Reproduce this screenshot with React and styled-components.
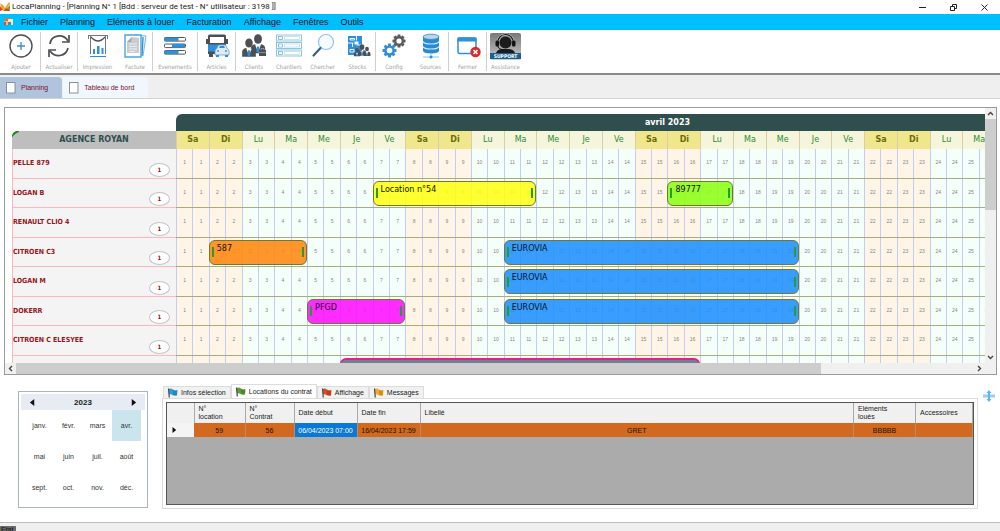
import React, { useState } from "react";
import styled, { createGlobalStyle } from "styled-components";

// ---------- STYLES ----------
const GlobalStyle = createGlobalStyle`
  * { box-sizing: border-box; }
  body {
    margin: 0;
    background: #fff;
    font-family: "Liberation Sans", Arial, sans-serif;
    font-size: 7px;
    color: #222;
  }
  button {
    font: inherit;
    color: inherit;
    border: 0;
    padding: 0;
    background: none;
  }
  svg { display: block; flex: none; }
`;

const Page = styled.div`
  display: flex;
  flex-direction: column;
  min-height: 100vh;
`;

const TitleBar = styled.header`
  display: flex;
  align-items: center;
  height: 14px;
  font-family: Roboto, sans-serif;
`;

const Title = styled.h1`
  flex: 1;
  margin: 0;
  padding-left: 1px;
  font-size: 8px;
  line-height: 12px;
  font-weight: 400;
`;

const WindowButton = styled.button`
  display: flex;
  justify-content: center;
  align-items: center;
  width: 31px;
  height: 12px;
`;

const MenuBar = styled.nav`
  display: flex;
  align-items: center;
  gap: 12px;
  height: 16px;
  padding-left: 4px;
  background: #00bfff;
`;

const MenuItem = styled.button`
  font-size: 9px;
  line-height: 14px;
  color: #061320;
`;

const MenuLogo = styled.span`
  margin-right: -4px;
`;

const Toolbar = styled.div`
  display: flex;
  height: 45px;
  padding: 2px 0 0 2px;
  border-bottom: 2px solid #8b8b8b;
`;

const Tool = styled.button`
  display: flex;
  flex-direction: column;
  align-items: center;
  justify-content: space-between;
  width: ${(props) => props.$width}px;
  height: 39px;
  border-right: 1px solid ${(props) => (props.$last ? "#cfcfcf" : "transparent")};
  font-family: "DejaVu Sans Condensed", "DejaVu Sans", sans-serif;
  font-size: 6px;
  line-height: 8px;
  color: #a2a2a2;
`;

const PageTabs = styled.div`
  display: flex;
  align-items: flex-end;
  gap: 1px;
  height: 24px;
  background: #efefef;
  border-bottom: 1px solid #d2d2d2;
`;

const PageTab = styled.button`
  display: flex;
  align-items: center;
  gap: 5px;
  height: 21px;
  padding: 0 14px 0 6px;
  border-radius: 0 4px 0 0;
  background: ${(props) => (props.$active ? "#b0c4de" : "#f0f7ff")};
  color: #7d1128;
`;

const Planner = styled.section`
  display: grid;
  grid-template-columns: 1fr 11px;
  grid-template-rows: 255px 11px;
  margin: 8px 3px 0 4px;
  border: 1px solid #9a9a9a;
`;

const PlannerView = styled.div`
  display: flex;
  overflow: hidden;
  padding: 6px 0 0 7px;
`;

const Resources = styled.div`
  flex: none;
  width: 164px;
  padding-top: 17px;
`;

const Agency = styled.div`
  position: relative;
  height: 18px;
  background: #bebebe;
  color: #2f4f4f;
  font-family: "DejaVu Sans", sans-serif;
  font-size: 8px;
  font-weight: 700;
  line-height: 18px;
  text-align: center;
`;

const Corner = styled.svg`
  position: absolute;
  left: 0;
  top: 0;
`;

const Rows = styled.div`
  display: grid;
  grid-template-rows: repeat(8, 1fr);
  height: 236px;
`;

const Resource = styled.div`
  display: flex;
  align-items: center;
  justify-content: space-between;
  padding-right: 6px;
  background: #f4f4f4;
  border-left: 1px solid #ffb6c1;
  border-bottom: 1px solid #ffb6c1;
  color: #961420;
  font-family: "DejaVu Sans Condensed", "DejaVu Sans", sans-serif;
  font-weight: 700;
`;

const Count = styled.span`
  align-self: flex-end;
  width: 21px;
  height: 14px;
  margin-bottom: 1px;
  border: 1px solid #c4c4c4;
  border-radius: 50%;
  background: #fff;
  font-size: 6px;
  line-height: 12px;
  text-align: center;
`;

const Timeline = styled.div`
  flex: 1;
  min-width: 0;
  overflow: hidden;
`;

const Month = styled.div`
  width: 983px;
`;

const MonthName = styled.div`
  height: 17px;
  border-radius: 6px 0 0 0;
  background: #2f4f4f;
  color: #fff;
  font-family: "DejaVu Sans", sans-serif;
  font-size: 8px;
  font-weight: 700;
  line-height: 17px;
  text-align: center;
`;

const Days = styled.div`
  display: grid;
  grid-template-columns: repeat(30, 1fr);
  height: 18px;
`;

const Day = styled.div`
  border-left: 1px solid #dccda6;
  background: ${(props) => (props.$weekend ? "#f0e68c" : "#f5f5dc")};
  color: ${(props) => (props.$weekend ? "#6b6b10" : "#2e8b2e")};
  font-family: "DejaVu Sans", sans-serif;
  font-weight: ${(props) => (props.$weekend ? 700 : 400)};
  font-size: 8px;
  line-height: 18px;
  text-align: center;
`;

const TimeRow = styled.div`
  display: grid;
  grid-template-columns: repeat(60, 1fr);
  grid-template-rows: 1fr;
  border-bottom: 1px solid #a9ad7c;
`;

const Slot = styled.div`
  grid-row: 1;
  grid-column: ${(props) => props.$column};
  display: flex;
  align-items: center;
  justify-content: center;
  padding-bottom: 2px;
  border-left: 1px solid #c3cdf3;
  background: ${(props) => (props.$weekend ? "#fff5e6" : "#f5fffa")};
  color: #858585;
  font-size: 5px;
`;

const Booking = styled.div`
  grid-row: 1;
  grid-column: ${(props) => props.$from * 2 - 1} / ${(props) => props.$to * 2 + 1};
  z-index: 1;
  display: flex;
  align-items: center;
  gap: 3px;
  height: 25px;
  margin-top: 2px;
  padding: 0 2px;
  border: 1px solid ${(props) => props.$border || "#6f7a30"};
  border-top-width: ${(props) => (props.$border ? 2 : 1)}px;
  border-radius: 6px;
  background: ${(props) => props.$color};
  color: #111;
  font-family: "DejaVu Sans", sans-serif;
  font-size: 8px;
  line-height: 8px;

  &::before,
  &::after {
    content: "";
    width: 2px;
    height: 10px;
    background: #21a032;
  }
`;

const BookingName = styled.span`
  flex: 1;
  padding-bottom: 7px;
`;

const Scroll = styled.div`
  display: flex;
  flex-direction: ${(props) => (props.$horizontal ? "row" : "column")};
  background: #f0f0f0;
`;

const ScrollButton = styled.button`
  display: flex;
  align-items: center;
  justify-content: center;
  width: 11px;
  height: 11px;
`;

const Track = styled.div`
  flex: 1;
`;

const Thumb = styled.div`
  width: ${(props) => (props.$horizontal ? "84%" : "100%")};
  height: ${(props) => (props.$horizontal ? "100%" : "39%")};
  background: #cdcdcd;
`;

const Bottom = styled.section`
  display: flex;
  align-items: flex-start;
  padding: 9px 5px 0 18px;
`;

const Calendar = styled.div`
  width: 130px;
  height: 117px;
  margin: 7px 14px 0 0;
  padding: 2px;
  border: 1px solid #a9b4be;
`;

const CalendarHead = styled.div`
  display: flex;
  align-items: center;
  justify-content: space-between;
  height: 16px;
  padding: 0 8px;
  background: #e6ebf4;
  font-size: 8px;
  font-weight: 700;
`;

const Months = styled.div`
  display: grid;
  grid-template-columns: repeat(4, 1fr);
  grid-auto-rows: 31px;
  padding: 0 4px;
`;

const MonthButton = styled.button`
  background: ${(props) => (props.$active ? "#cbe5ee" : "transparent")};
  color: #333;
`;

const Details = styled.div`
  flex: 1;
  min-width: 0;
`;

const DetailTabs = styled.div`
  display: flex;
  align-items: flex-end;
  height: 14px;
  padding-left: 1px;
`;

const DetailTab = styled.button`
  display: flex;
  align-items: center;
  gap: 3px;
  height: ${(props) => (props.$active ? 14 : 12)}px;
  padding: 0 4px 0 3px;
  border: 1px solid #dcdcdc;
  border-bottom: 0;
  background: ${(props) => (props.$active ? "#fff" : "#f1f1f1")};
`;

const DetailPanel = styled.div`
  padding: 3px;
  border: 1px solid #dcdcdc;
`;

const GridFrame = styled.div`
  height: 103px;
  border: 1px solid #555;
  background: #ababab;
`;

const Table = styled.table`
  width: 100%;
  border-collapse: collapse;
  table-layout: fixed;
`;

const Col = styled.col`
  width: ${(props) => (props.$width ? `${props.$width}px` : "auto")};
`;

const Th = styled.th`
  height: 20px;
  padding: 0 4px;
  border-right: 1px solid #a9a9a9;
  background: #f0f0f0;
  font-weight: 400;
  line-height: 8px;
  text-align: left;
`;

const Td = styled.td`
  height: 14px;
  padding: 0;
  border-right: 1px solid #b98c68;
  background: ${(props) => (props.$selected ? "#0a78d7" : "#d2691e")};
  color: ${(props) => (props.$selected ? "#fff" : "#1c1208")};
  text-align: center;
  white-space: nowrap;
`;

const RowHead = styled.th`
  padding: 0 4px;
  background: #f4f4f4;
`;

const SplitButton = styled.button`
  margin: 6px 0 0 5px;
`;

const StatusBar = styled.footer`
  height: 9px;
  margin-top: auto;
  padding-top: 3px;
  overflow: hidden;
  border-top: 1px solid #bdbdbd;
  background: #efefef;
`;

const Status = styled.span`
  display: block;
  width: 16px;
  padding-left: 1px;
  background: #6a6a6a;
  color: #111;
  line-height: 8px;
`;

// ---------- ICONS ----------
const BLUE = "#2f8fd8";
const DARK = "#4d4f53";

const Icon = ({ width = 28, children }) => (
  <svg width={width} height="28" viewBox={`0 0 ${width} 28`} fill="none" aria-hidden="true">
    {children}
  </svg>
);

const Gear = ({ x, y, r, color }) => (
  <g transform={`translate(${x} ${y})`}>
    {[0, 45, 90, 135].map((a) => (
      <rect key={a} x="-1.5" y={-r} width="3" height={r * 2} rx="0.6" fill={color} transform={`rotate(${a})`} />
    ))}
    <circle r={r * 0.76} fill={color} />
    <circle r={r * 0.4} fill="#fff" />
  </g>
);

const Person = ({ x, y, s = 1, color = DARK }) => (
  <g transform={`translate(${x} ${y}) scale(${s})`}>
    <ellipse cx="0" cy="0" rx="3.6" ry="4.4" fill={color} />
    <path d="M-6.5 13V8.500q0-3 3.700-3.800L0 8l2.800-3.300q3.700.8 3.700 3.800V13z" fill={color} />
    <path d="M-2.600 5.200 0 12l2.600-6.800L0 6.800z" fill="#fff" />
    <path d="M-.9 6.800h1.800l.6 4.400L0 13l-1.500-1.800z" fill={BLUE} />
  </g>
);

const icons = {
  add: (
    <Icon>
      <circle cx="14" cy="14" r="11" stroke={DARK} strokeWidth="1.4" />
      <path d="M14 10v8M10 14h8" stroke={BLUE} strokeWidth="1.3" />
    </Icon>
  ),
  refresh: (
    <Icon>
      <path d="M5 12C6 3 18 1 23 9M23 16C21 25 10 26 5 19" stroke={DARK} strokeWidth="1.7" />
      <path d="M24 3v7h-7M4 25v-7h7" stroke={DARK} strokeWidth="1.7" />
    </Icon>
  ),
  print: (
    <Icon>
      <path d="M4 3.5h20M4.5 3v4M23.5 3v4M6.5 4v18M21.5 4v18" stroke="#777" />
      <path d="M7 5q7 8 14 0" stroke={DARK} strokeWidth="1.3" />
      <path d="M9 22v-5h2v5zM13 22v-8h2.5v8zM17.500 22v-6h2v6z" fill={BLUE} />
      <path d="M6 24.500h16" stroke={BLUE} />
    </Icon>
  ),
  invoice: (
    <Icon>
      <path d="M14 3 25 4l-3 20" stroke="#78b6e6" fill="#eef7fd" />
      <path d="m22 5-1 19" stroke={BLUE} strokeWidth="1.3" />
      <path d="M4 3h16v22H4z" fill="#fff" stroke="#4aa5e2" strokeWidth="1.4" />
      <path d="m11 5 7 1v15H6V10z" fill="#c9cccf" />
      <path d="m11 5-1 5H6z" fill="#9fa4a8" />
      <path d="M8 12h8M8 14.500h8M8 17h8M8 19.500h6" stroke="#eee" />
    </Icon>
  ),
  events: (
    <Icon>
      {[5.5, 12, 18.5].map((y, i) => (
        <g key={y}>
          <rect x="3.5" y={y} width="21" height="3.6" rx="1" stroke="#555" />
          <rect x={i === 1 ? 11 : 3.5} y={y} width={i === 1 ? 13 : 14} height="3.6" fill={BLUE} />
        </g>
      ))}
    </Icon>
  ),
  items: (
    <Icon>
      <path d="M5 4q0-1.500 1.500-1.500h15Q23 2.500 23 4v9H5z" fill={DARK} />
      <path d="M7 5h14v6H7z" fill="#fff" />
      <path d="M5 12.500h18V20H5z" fill={BLUE} />
      <path d="M5 19.500h17V22H5zM6 22h4v3H6z" fill={DARK} />
      <path d="M3 7h2v5H3zM23 7h2v5h-2z" fill={DARK} />
      <path d="M12 19q0-1.500 1.500-2l2-4h7l2 4q1.500.5 1.500 2v4H12z" fill="#d9ecfa" stroke="#5c9fd3" strokeWidth="0.8" />
      <path d="m16 16 1-2h4l1 2zM13 23h3v2h-3zM22 23h3v2h-3z" fill={BLUE} />
      <path d="M14 19h2M22 19h2" stroke={DARK} />
    </Icon>
  ),
  clients: (
    <Icon>
      <Person x={18} y={7} s={1.1} />
      <Person x={9} y={11} s={1.05} />
      <rect x="19" y="18" width="7" height="6" fill={DARK} />
      <path d="M19 20.500h7M21 18v-1.500h3V18" stroke="#aaa" strokeWidth="0.7" />
    </Icon>
  ),
  sites: (
    <Icon>
      {[3, 10.5, 18].map((y) => (
        <g key={y} stroke="#72b9d4" strokeWidth="0.8">
          <rect x="1.5" y={y} width="25" height="6" />
          <rect x="3.5" y={y + 1.5} width="4" height="3" />
          <path d={`M9.5 ${y + 1.5}h15v3h-15z`} strokeOpacity="0.5" />
        </g>
      ))}
    </Icon>
  ),
  search: (
    <Icon>
      <circle cx="17" cy="10" r="7.5" stroke="#8fc3ec" strokeWidth="1.2" fill="#f6fbff" />
      <path d="m11.500 16-7 7.500" stroke="#34608c" strokeWidth="2.2" strokeLinecap="round" />
    </Icon>
  ),
  stocks: (
    <Icon>
      <path d="M4 4h14v19H4z" fill={BLUE} />
      <path d="M6 6.500h4.500v1.500H6zM12.500 4v4.500M4 11h5.500M12.500 13h5.500M8.500 11v4M6 17.500h4V20H6z" stroke="#fff" strokeWidth="0.9" />
      <path d="M10.500 9.500h4v3h-4z" fill="#fff" />
      <path d="m10 24 2-6h3l2 6z" fill="#2d72a8" />
      <Person x={18} y={15} s={0.65} />
      <Person x={23} y={17} s={0.53} />
      <Person x={13} y={18} s={0.48} />
    </Icon>
  ),
  config: (
    <Icon>
      <Gear x={19} y={9} r={6.5} color="#5a5b5e" />
      <Gear x={9.5} y={18.5} r={7} color={BLUE} />
    </Icon>
  ),
  sources: (
    <Icon>
      <path d="M6 4.500v14q0 3 8 3t8-3v-14z" fill="#248bd4" />
      <ellipse cx="14" cy="4.800" rx="8" ry="2.600" fill="#c4d2dc" stroke="#248bd4" strokeWidth="0.8" />
      <path d="M6 9.500q1 2.500 8 2.500t8-2.500M6 14.500q1 2.500 8 2.500t8-2.500" stroke="#d7e9f5" strokeWidth="1.2" />
      <path d="M14 21v4M6 25h16" stroke="#8dc3e8" />
      <circle cx="14" cy="25" r="1.5" fill={BLUE} />
    </Icon>
  ),
  close: (
    <Icon>
      <rect x="4" y="6" width="18" height="15.5" rx="1.5" stroke={BLUE} strokeWidth="1.5" />
      <path d="M3.500 5.500h19v4h-19z" fill={BLUE} />
      <circle cx="21.5" cy="20" r="5.2" fill="#d8292f" />
      <path d="m19.500 18 4 4m0-4-4 4" stroke="#fff" strokeWidth="1.6" />
    </Icon>
  ),
  support: (
    <Icon width={31}>
      <defs>
        <linearGradient id="support" x1="0" y1="0" x2="0" y2="1">
          <stop offset="0" stopColor="#777" />
          <stop offset="0.6" stopColor="#a8a8a8" />
          <stop offset="1" stopColor="#d0d0d0" />
        </linearGradient>
      </defs>
      <rect y="1" width="31" height="27" rx="2" fill="url(#support)" />
      <path d="M6 21q1-3.500 6-4h7q5 .5 6 4z" fill="#1a1a1a" />
      <circle cx="15.5" cy="10.5" r="6" fill="#1c1c1c" />
      <path d="M7.500 11a8 8.500 0 0 1 16 0" stroke="#ddd" strokeWidth="2.2" />
      <path d="M7.500 11a8 8.500 0 0 1 16 0" stroke="#111" strokeWidth="1.2" />
      <rect x="5.5" y="8.5" width="3.5" height="6" rx="1.5" fill="#111" />
      <rect x="22" y="8.5" width="3.500" height="6" rx="1.5" fill="#111" />
      <path d="M7.500 14q1 3.500 6 4" stroke="#111" />
      <path d="M0 21h31v6H0z" fill="#17618f" />
      <text x="15.5" y="26" fill="#fff" fontSize="5" fontWeight="700" textAnchor="middle">SUPPORT</text>
    </Icon>
  ),
};

const AppLogo = () => (
  <svg width="11" height="12" viewBox="0 0 11 12" aria-hidden="true">
    <path d="M0 2 3 4 5 7 9 1l1 2-4 5-4 1z" fill="#f2a126" />
    <path d="m0 5 3 4-3 1zM5 8l4-2 1 4H3z" fill="#cf4a2a" />
    <path d="m6 8 4-4v4z" fill="#78a83a" />
  </svg>
);

const FormLogo = () => (
  <svg width="9" height="10" viewBox="0 0 9 10" aria-hidden="true">
    <path d="M1 1h5v4H1z" fill="#ec6a3c" />
    <path d="M4 2h5v6H4z" fill="#f5e9c4" />
    <path d="M0 4h4v4H0z" fill="#f4c04d" />
    <path d="M4 5h3v3H4z" fill="#4a83d4" />
    <path d="M0 5h2v3H0z" fill="#d44" />
  </svg>
);

const PageIcon = () => (
  <svg width="10" height="12" viewBox="0 0 10 12" aria-hidden="true">
    <rect x="0.5" y="0.5" width="8.5" height="10.5" fill="#fff" stroke="#8b8f98" />
    <path d="M2.500 3h4.500M2.500 5h4.500M2.500 7h4.500" stroke="#edf0f4" strokeWidth="0.5" />
  </svg>
);

const Flag = ({ color }) => (
  <svg width="11" height="10" viewBox="0 0 11 10" aria-hidden="true">
    <path d="M2 1q2-1 4 .5T10.500 2L10 7.500q-3 .5-4.500-.5T2 6.500z" fill={color} />
    <path d="M6 2v5q2 .6 4 .2V2.200Q8 2.600 6 2z" fill="#000" fillOpacity="0.15" />
    <path d="m1.500.5.800 9" stroke="#3e4a55" strokeWidth="1.2" />
  </svg>
);

const Chevron = ({ turn = 0 }) => (
  <svg width="7" height="7" viewBox="0 0 7 7" fill="none" aria-hidden="true">
    <path d="m1 5 2.500-2.500L6 5" stroke="#444" strokeWidth="1.4" transform={`rotate(${turn} 3.5 3.5)`} />
  </svg>
);

const Arrow = ({ flip, size = 7 }) => (
  <svg width={size} height={size} viewBox="0 0 8 8" aria-hidden="true">
    <path d={flip ? "M6 0v8L1 4z" : "M2 0v8l5-4z"} fill="#111" />
  </svg>
);

// ---------- DATA ----------
const menus = ["Fichier", "Planning", "Eléments  à louer", "Facturation", "Affichage", "Fenêtres", "Outils"];

const tools = [
  { label: "Ajouter", icon: "add", width: 39, last: true },
  { label: "Actualiser", icon: "refresh", width: 37, last: true },
  { label: "Impression", icon: "print", width: 40 },
  { label: "Facture", icon: "invoice", width: 35, last: true },
  { label: "Evenements", icon: "events", width: 45, last: true },
  { label: "Articles", icon: "items", width: 38, last: true },
  { label: "Clients", icon: "clients", width: 37 },
  { label: "Chantiers", icon: "sites", width: 33 },
  { label: "Chercher", icon: "search", width: 34 },
  { label: "Stocks", icon: "stocks", width: 36, last: true },
  { label: "Config", icon: "config", width: 37 },
  { label: "Sources", icon: "sources", width: 36, last: true },
  { label: "Fermer", icon: "close", width: 38, last: true },
  { label: "Assistance", icon: "support", width: 38 },
];

const weekdays = ["Sa", "Di", "Lu", "Ma", "Me", "Je", "Ve"];
const days = Array.from({ length: 30 }, (_, i) => ({
  number: i + 1,
  name: weekdays[i % 7],
  weekend: i % 7 < 2,
}));

const eurovia = { name: "EUROVIA", from: 11, to: 19, color: "rgba(30,144,255,0.88)" };
const resources = [
  { name: "PELLE 879", bookings: [] },
  {
    name: "LOGAN B",
    bookings: [
      { name: "Location n°54", from: 7, to: 11, color: "rgba(255,255,20,0.88)" },
      { name: "89777", from: 16, to: 17, color: "rgba(140,255,20,0.88)" },
    ],
  },
  { name: "RENAULT CLIO 4", bookings: [] },
  { name: "CITROEN C3", bookings: [{ name: "587", from: 2, to: 4, color: "rgba(255,135,15,0.88)" }, eurovia] },
  { name: "LOGAN M", bookings: [eurovia] },
  { name: "DOKERR", bookings: [{ name: "PFGD", from: 5, to: 7, color: "rgba(255,15,255,0.88)" }, eurovia] },
  { name: "CITROEN C ELESYEE", bookings: [] },
  { name: "", bookings: [{ name: "", from: 6, to: 16, color: "#708090", border: "#e0218a" }] },
];

const months = ["janv.", "févr.", "mars", "avr.", "mai", "juin", "juil.", "août", "sept.", "oct.", "nov.", "déc."];

const detailTabs = [
  { label: "Infos sélection", color: "#2aa0d8" },
  { label: "Locations du contrat", color: "#5d9e2f" },
  { label: "Affichage", color: "#dd4a22" },
  { label: "Messages", color: "#f4ab22" },
];

const Schedule = () => (
  <Planner>
    <PlannerView>
      <Resources>
        <Agency>
          <Corner width="7" height="7" viewBox="0 0 7 7" aria-hidden="true">
            <path d="M0 0h7Q2 1 0 7z" fill="#fff" />
            <path d="M0 6.500V4q1-3 4-4h3v1Q3 2 0 6.500z" fill="#158a1d" />
          </Corner>
          AGENCE ROYAN
        </Agency>
        <Rows>
          {resources.map((r) => (
            <Resource key={r.name}>
              {r.name}
              {r.name && <Count>1</Count>}
            </Resource>
          ))}
        </Rows>
      </Resources>
      <Timeline>
        <Month>
          <MonthName>avril 2023</MonthName>
          <Days>
            {days.map((d) => (
              <Day key={d.number} $weekend={d.weekend}>{d.name}</Day>
            ))}
          </Days>
          <Rows>
            {resources.map((r) => (
              <TimeRow key={r.name}>
                {days.flatMap((d) =>
                  [0, 1].map((half) => (
                    <Slot key={`${d.number}-${half}`} $column={d.number * 2 - 1 + half} $weekend={d.weekend}>
                      {r.name && d.number}
                    </Slot>
                  ))
                )}
                {r.bookings.map((b) => (
                  <Booking key={b.from} $from={b.from} $to={b.to} $color={b.color} $border={b.border}>
                    <BookingName>{b.name}</BookingName>
                  </Booking>
                ))}
              </TimeRow>
            ))}
          </Rows>
        </Month>
      </Timeline>
    </PlannerView>
    <Scroll>
      <ScrollButton aria-label="Haut"><Chevron /></ScrollButton>
      <Track><Thumb /></Track>
      <ScrollButton aria-label="Bas"><Chevron turn={180} /></ScrollButton>
    </Scroll>
    <Scroll $horizontal>
      <ScrollButton aria-label="Gauche"><Chevron turn={270} /></ScrollButton>
      <Track><Thumb $horizontal /></Track>
      <ScrollButton aria-label="Droite"><Chevron turn={90} /></ScrollButton>
    </Scroll>
    <Scroll />
  </Planner>
);

const App = () => {
  const [page, setPage] = useState("Planning");
  const [month, setMonth] = useState("avr.");
  const [detail, setDetail] = useState("Locations du contrat");

  return (
    <Page>
      <GlobalStyle />
      <TitleBar>
        <AppLogo />
        <Title>LocaPlanning - [Planning N° 1 [Bdd : serveur de test - N° utilisateur : 3198 ]]</Title>
        <WindowButton aria-label="Réduire">
          <svg width="7" height="7"><path d="M0 3.500h7" stroke="#222" /></svg>
        </WindowButton>
        <WindowButton aria-label="Restaurer">
          <svg width="7" height="7" fill="none" stroke="#222">
            <path d="M.5 2.500h4v4h-4zM2.500 2.500v-2h4v4h-2" />
          </svg>
        </WindowButton>
        <WindowButton aria-label="Fermer">
          <svg width="7" height="7"><path d="m.5.5 6 6m0-6-6 6" stroke="#222" /></svg>
        </WindowButton>
      </TitleBar>

      <MenuBar>
        <MenuLogo><FormLogo /></MenuLogo>
        {menus.map((m) => (
          <MenuItem key={m}>{m}</MenuItem>
        ))}
      </MenuBar>

      <Toolbar>
        {tools.map((t) => (
          <Tool key={t.label} $width={t.width} $last={t.last}>
            {icons[t.icon]}
            {t.label}
          </Tool>
        ))}
      </Toolbar>

      <PageTabs>
        {["Planning", "Tableau de bord"].map((p) => (
          <PageTab key={p} $active={page === p} onClick={() => setPage(p)}>
            <PageIcon />
            {p}
          </PageTab>
        ))}
      </PageTabs>

      <Schedule />

      <Bottom>
        <Calendar>
          <CalendarHead>
            <button aria-label="Année précédente"><Arrow flip /></button>
            2023
            <button aria-label="Année suivante"><Arrow /></button>
          </CalendarHead>
          <Months>
            {months.map((m) => (
              <MonthButton key={m} $active={month === m} onClick={() => setMonth(m)}>{m}</MonthButton>
            ))}
          </Months>
        </Calendar>

        <Details>
          <DetailTabs>
            {detailTabs.map((t) => (
              <DetailTab key={t.label} $active={detail === t.label} onClick={() => setDetail(t.label)}>
                <Flag color={t.color} />
                {t.label}
              </DetailTab>
            ))}
          </DetailTabs>
          <DetailPanel>
            <GridFrame>
              <Table>
                <colgroup>
                  <Col $width={27} />
                  <Col $width={51} />
                  <Col $width={49} />
                  <Col $width={63} />
                  <Col $width={63} />
                  <Col />
                  <Col $width={62} />
                  <Col $width={57} />
                </colgroup>
                <thead>
                  <tr>
                    <Th aria-label="Ligne" />
                    <Th>N°<br />location</Th>
                    <Th>N°<br />Contrat</Th>
                    <Th>Date début</Th>
                    <Th>Date fin</Th>
                    <Th>Libellé</Th>
                    <Th>Eléments<br />loués</Th>
                    <Th>Accessoires</Th>
                  </tr>
                </thead>
                <tbody>
                  <tr>
                    <RowHead scope="row" aria-label="Ligne 1"><Arrow size={6} /></RowHead>
                    <Td>59</Td>
                    <Td>56</Td>
                    <Td $selected>06/04/2023 07:00</Td>
                    <Td>16/04/2023 17:59</Td>
                    <Td>GRET</Td>
                    <Td>BBBBB</Td>
                    <Td />
                  </tr>
                </tbody>
              </Table>
            </GridFrame>
          </DetailPanel>
        </Details>

        <SplitButton aria-label="Redimensionner">
          <svg width="12" height="12" viewBox="0 0 12 12">
            <path d="M0 4.500h12v3H0z" fill="#9bcdf7" />
            <path d="M6 0 8.500 3H7v6h1.500L6 12 3.500 9H5V3H3.500z" fill="#62b3f5" />
          </svg>
        </SplitButton>
      </Bottom>

      <StatusBar>
        <Status>Etat</Status>
      </StatusBar>
    </Page>
  );
};

export default App;
